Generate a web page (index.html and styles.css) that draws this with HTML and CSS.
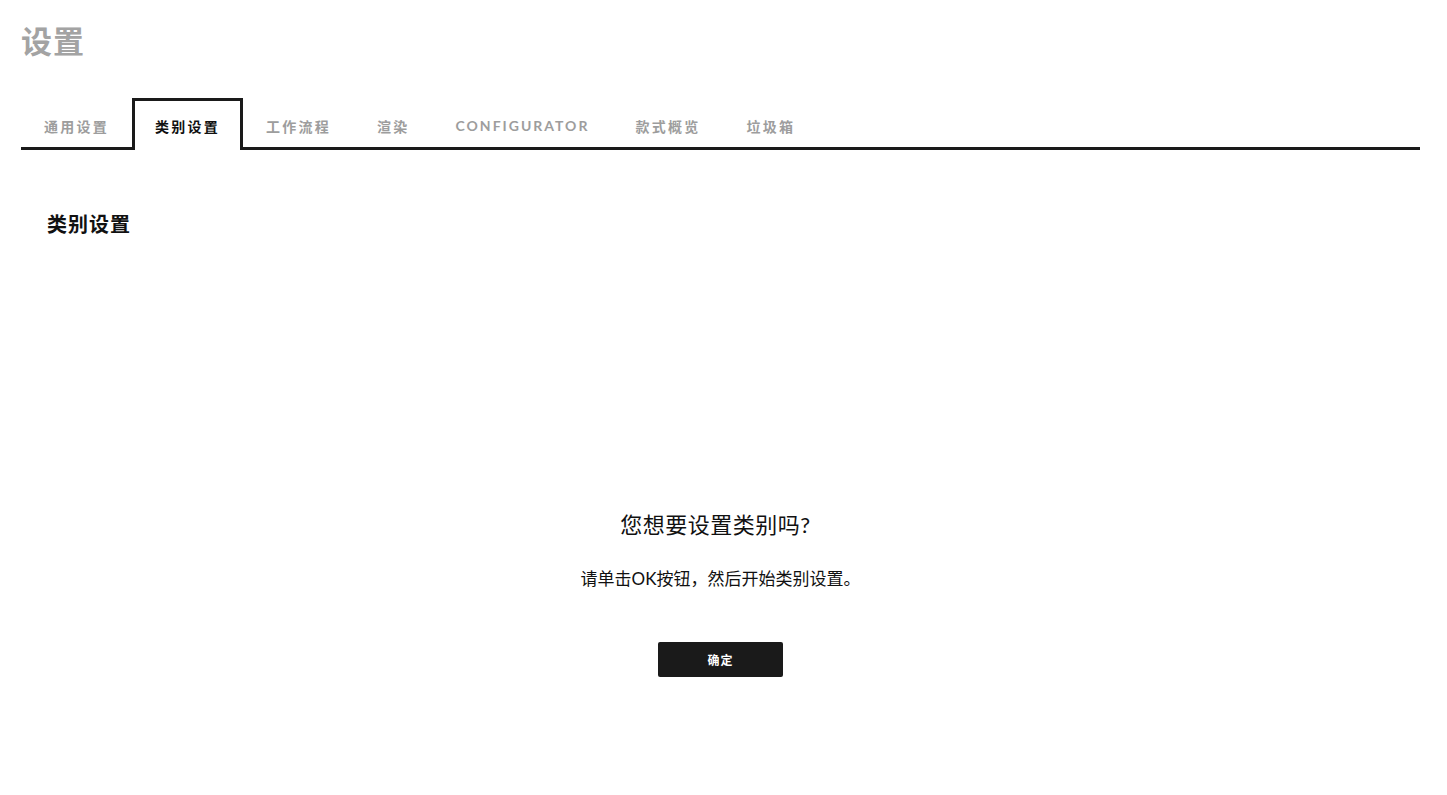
FILE: index.html
```html
<!DOCTYPE html>
<html lang="zh-CN">
  <head>
    <meta charset="UTF-8" />
    <title>设置</title>
    <link rel="stylesheet" href="styles.css">
  </head>
  <body>
    <div class="page">
      <h1 class="page-title">设置</h1>

      <ul class="tabs">
        <li class="tab">通用设置</li>
        <li class="tab active">类别设置</li>
        <li class="tab">工作流程</li>
        <li class="tab">渲染</li>
        <li class="tab latin">CONFIGURATOR</li>
        <li class="tab">款式概览</li>
        <li class="tab">垃圾箱</li>
      </ul>

      <div class="panel">
        <h2 class="section-title">类别设置</h2>

        <div class="prompt">
          <h3 class="prompt-title">您想要设置类别吗?</h3>
          <p class="prompt-text">请单击OK按钮，然后开始类别设置。</p>
          <button class="btn-ok">确定</button>
        </div>
      </div>
    </div>
  </body>
</html>
```

FILE: styles.css
```css
body {
  margin: 0;
  background: #fff;
  color: #111;
  font-family: "Lato", "Noto Sans CJK SC", sans-serif;
}

.page {
  padding: 0 27px 0 21px;
}

.page-title {
  margin: 0;
  padding-top: 19px;
  font-size: 31px;
  line-height: 44px;
  font-weight: 700;
  color: #a3a3a3;
  letter-spacing: 1px;
}

.tabs {
  display: flex;
  align-items: flex-end;
  list-style: none;
  margin: 35px 0 0;
  padding: 0;
  border-bottom: 3px solid #1a1a1a;
}

.tab {
  padding: 17px 20px 14px;
  margin-bottom: -3px;
  border: 3px solid transparent;
  border-bottom: none;
  font-size: 14px;
  line-height: 18px;
  font-weight: 700;
  letter-spacing: 2.25px;
  color: #9d9d9d;
  white-space: nowrap;
  cursor: pointer;
}

.tab.latin {
  letter-spacing: 2px;
  padding-bottom: 16px;
  line-height: 16px;
}

.tab.active {
  color: #111;
  background: #fff;
  border-color: #1a1a1a;
}

.panel {
  padding: 0 26px;
}

.section-title {
  margin: 60px 0 0;
  font-size: 20px;
  line-height: 28px;
  font-weight: 700;
  letter-spacing: 1px;
}

.prompt {
  display: flex;
  flex-direction: column;
  align-items: center;
  margin-top: 272px;
}

.prompt-title {
  margin: 0 10px 0 0;
  font-size: 22px;
  line-height: 30px;
  font-weight: 400;
  letter-spacing: 0.5px;
  color: #111;
}

.prompt-text {
  margin: 28px 0 0;
  font-size: 17px;
  line-height: 22px;
  color: #111;
}

.btn-ok {
  margin-top: 52px;
  width: 125px;
  height: 35px;
  border: none;
  border-radius: 2px;
  background: #1a1a1a;
  color: #fff;
  font-family: "Lato", "Noto Sans CJK SC", sans-serif;
  font-size: 12px;
  font-weight: 700;
  letter-spacing: 1px;
  cursor: pointer;
}
```
